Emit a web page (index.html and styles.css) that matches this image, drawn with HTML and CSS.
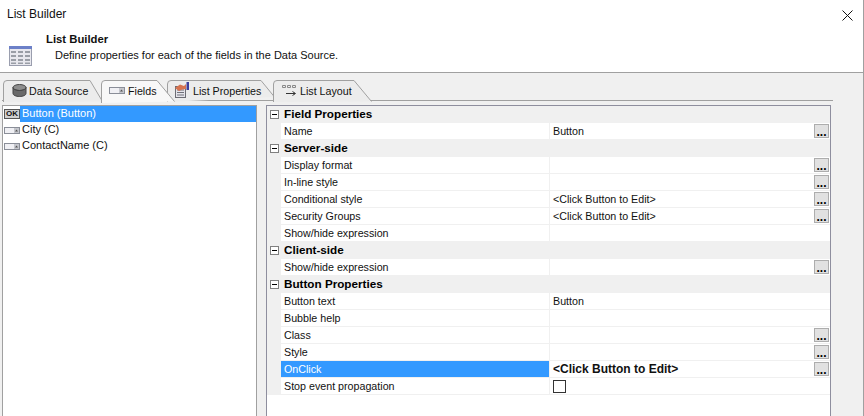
FILE: index.html
```html
<!DOCTYPE html>
<html lang="en">
<head>
<meta charset="utf-8">
<title>List Builder</title>
<link rel="stylesheet" href="styles.css">
</head>
<body>
<div class="window">
  <header class="head">
    <div class="titlebar">
      <span>List Builder</span>
      <svg class="close" width="11" height="11" viewBox="0 0 11 11"><path d="M0.5 0.5L10.5 10.5M10.5 0.5L0.5 10.5" stroke="#111" fill="none"/></svg>
    </div>
    <div class="banner">
      <svg class="banner-icon" width="23" height="20" viewBox="0 0 23 20">
        <rect x="0.5" y="0.5" width="22" height="19" fill="#e8e8ee" stroke="#9a9eae"/>
        <rect x="0" y="0" width="23" height="3" fill="#6c80c8"/>
        <path d="M2 5h5v2h-5zM9 5h5v2h-5zM16 5h5v2h-5zM2 9h5v2h-5zM9 9h5v2h-5zM16 9h5v2h-5zM2 13h5v2h-5zM9 13h5v2h-5zM16 13h5v2h-5zM2 16.500h5v1.500h-5zM9 16.500h5v1.500h-5zM16 16.500h5v1.500h-5z" fill="#9a9ea6"/>
      </svg>
      <div class="banner-text">
        <div class="banner-title">List Builder</div>
        <div class="banner-sub">Define properties for each of the fields in the Data Source.</div>
      </div>
    </div>
  </header>
  <main class="body">
    <nav class="tabs">
      <div class="tab tab-source">
        <svg class="tab-bg" width="100" height="22" viewBox="0 0 100 22"><path d="M0.500 22V4Q0.500 0.500 4 0.500H87L99.500 21.500" fill="#ececec" stroke="#a0a0a0"/></svg>
        <svg class="tab-icon" width="15" height="13" viewBox="0 0 15 13"><ellipse cx="7.500" cy="3.500" rx="6.500" ry="3" fill="#8e8e8e" stroke="#444"/><path d="M1 3.500V9.500C1 11.200 4 12.500 7.500 12.500S14 11.200 14 9.500V3.500C14 5.200 11 6.500 7.500 6.500S1 5.200 1 3.500Z" fill="#6a6a6a" stroke="#444"/></svg>
        <span>Data Source</span>
      </div>
      <div class="tab tab-fields">
        <svg class="tab-bg" width="74" height="23" viewBox="0 0 74 23"><path d="M0.500 23V4Q0.500 0.500 4 0.500H56L73.500 21.500" fill="#f8f8f8" stroke="#a0a0a0"/></svg>
        <svg class="tab-icon" width="16" height="7" viewBox="0 0 16 7"><rect x="0.500" y="0.500" width="15" height="6" fill="#f0f0f4" stroke="#8a8e98"/><rect x="10" y="1" width="5" height="5" fill="#c4c6cc"/><path d="M11 4.500h3l-1.500-2z" fill="#555"/></svg>
        <span>Fields</span>
      </div>
      <div class="tab tab-props">
        <svg class="tab-bg" width="108" height="22" viewBox="0 0 108 22"><path d="M0.500 22V4Q0.500 0.500 4 0.500H94L107.500 17" fill="#ececec" stroke="#a0a0a0"/></svg>
        <svg class="tab-icon" width="16" height="16" viewBox="0 0 16 16"><rect x="1.500" y="4.500" width="10" height="11" fill="#e4e4ea" stroke="#6c6c74"/><path d="M3 8h7M3 10.500h7M3 13h7" stroke="#70707a"/><path d="M1 6L6 2.500L10 4L12 2V7L8 7.500L5 9Z" fill="#d6734f"/><rect x="12.500" y="0" width="2.500" height="8" fill="#3c3f9c"/></svg>
        <span>List Properties</span>
      </div>
      <div class="tab tab-layout">
        <svg class="tab-bg" width="99" height="22" viewBox="0 0 99 22"><path d="M0.500 22V4Q0.500 0.500 4 0.500H81L98.500 21.500" fill="#ececec" stroke="#a0a0a0"/></svg>
        <svg class="tab-icon" width="15" height="13" viewBox="0 0 15 13"><path d="M0.500 1.500h3v2h-3zM5.500 1.500h3v2h-3zM10.500 1.500h3v2h-3z" fill="none" stroke="#888"/><path d="M4 9.500h9M10.500 7.500l3 2-3 2" stroke="#333" fill="none"/></svg>
        <span>List Layout</span>
      </div>
    </nav>
    <div class="panels">
      <ul class="tree">
        <li class="tree-row">
          <span class="ok-icon">OK</span>
          <span class="tree-label selected">Button (Button)</span>
        </li>
        <li class="tree-row">
          <svg class="field-icon" width="16" height="7" viewBox="0 0 16 7"><rect x="0.500" y="0.500" width="15" height="6" fill="#f0f0f4" stroke="#8a8e98"/><rect x="10" y="1" width="5" height="5" fill="#c4c6cc"/><path d="M11 4.500h3l-1.500-2z" fill="#555"/></svg>
          <span class="tree-label">City (C)</span>
        </li>
        <li class="tree-row">
          <svg class="field-icon" width="16" height="7" viewBox="0 0 16 7"><rect x="0.500" y="0.500" width="15" height="6" fill="#f0f0f4" stroke="#8a8e98"/><rect x="10" y="1" width="5" height="5" fill="#c4c6cc"/><path d="M11 4.500h3l-1.500-2z" fill="#555"/></svg>
          <span class="tree-label">ContactName (C)</span>
        </li>
      </ul>
      <div class="grid">
        <div class="group"><span class="toggle"></span><span>Field Properties</span></div>
        <div class="row"><div class="name">Name</div><div class="value">Button<button class="dots">...</button></div></div>
        <div class="group"><span class="toggle"></span><span>Server-side</span></div>
        <div class="row"><div class="name">Display format</div><div class="value"><button class="dots">...</button></div></div>
        <div class="row"><div class="name">In-line style</div><div class="value"><button class="dots">...</button></div></div>
        <div class="row"><div class="name">Conditional style</div><div class="value">&lt;Click Button to Edit&gt;<button class="dots">...</button></div></div>
        <div class="row"><div class="name">Security Groups</div><div class="value">&lt;Click Button to Edit&gt;<button class="dots">...</button></div></div>
        <div class="row"><div class="name">Show/hide expression</div><div class="value"></div></div>
        <div class="group"><span class="toggle"></span><span>Client-side</span></div>
        <div class="row"><div class="name">Show/hide expression</div><div class="value"><button class="dots">...</button></div></div>
        <div class="group"><span class="toggle"></span><span>Button Properties</span></div>
        <div class="row"><div class="name">Button text</div><div class="value">Button</div></div>
        <div class="row"><div class="name">Bubble help</div><div class="value"></div></div>
        <div class="row"><div class="name">Class</div><div class="value"><button class="dots">...</button></div></div>
        <div class="row"><div class="name">Style</div><div class="value"><button class="dots">...</button></div></div>
        <div class="row active"><div class="name">OnClick</div><div class="value">&lt;Click Button to Edit&gt;<button class="dots">...</button></div></div>
        <div class="row"><div class="name">Stop event propagation</div><div class="value"><span class="check"></span></div></div>
      </div>
    </div>
  </main>
</div>
</body>
</html>
```
FILE: styles.css
```css
* { box-sizing: border-box; }
html, body { margin: 0; height: 100%; overflow: hidden; }
body { font-family: "Liberation Sans", Arial, sans-serif; font-size: 11px; color: #111; background: #fff; }
.window { width: 864px; height: 416px; display: flex; flex-direction: column; border-right: 1px solid #a0a0a0; overflow: hidden; }
.head { height: 73px; background: #fff; border-bottom: 1px solid #a0a0a0; flex: none; padding: 7px 10px 0 7px; }
.titlebar { display: flex; justify-content: space-between; align-items: center; height: 14px; font-size: 12px; }
.close { margin-top: 2px; }
.banner { display: flex; padding: 10px 0 0 2px; }
.banner-icon { margin-top: 15px; flex: none; }
.banner-text { margin-left: 14px; }
.banner-title { font-weight: bold; font-size: 11.300px; height: 16px; line-height: 16px; }
.banner-sub { margin-left: 9px; height: 16px; line-height: 16px; }
.body { flex: 1; min-height: 0; background: #f0f0f0; padding: 7px 32px 0 2px; display: flex; flex-direction: column; }
.tabs { display: flex; height: 21px; flex: none; margin-right: -2px; border-bottom: 1px solid #a0a0a0; padding-left: 1px; font-size: 10.700px; }
.tab { position: relative; height: 21px; display: flex; align-items: center; flex: none; }
.tab-bg { position: absolute; left: 0; top: 0; }
.tab-icon, .tab span { position: relative; }
.tab-source { width: 98px; padding-left: 9px; }
.tab-source .tab-icon { margin-right: 2px; }
.tab-fields { width: 66px; padding-left: 8px; z-index: 3; }
.tab-fields .tab-icon { margin-right: 3px; }
.tab-props { width: 106px; padding-left: 7px; z-index: 1; }
.tab-props .tab-icon { margin-right: 3px; margin-top: -2px; }
.tab-layout { width: 99px; padding-left: 9px; z-index: 2; }
.tab-layout .tab-icon { margin-right: 3px; }
.panels { flex: 1; min-height: 0; display: flex; margin-top: 4px; gap: 9px; }
.tree { list-style: none; margin: 0; padding: 0; width: 255px; background: #fff; border: 1px solid #a0a0a0; border-bottom: 0; flex: none; }
.tree-row { height: 16px; display: flex; align-items: center; }
.ok-icon, .field-icon { width: 16px; margin-left: 1px; flex: none; }
.ok-icon { height: 10px; background: #d0d0d0; border: 1px solid #555; font: bold 8px/8px "Liberation Sans", sans-serif; text-align: center; overflow: hidden; }
.tree-label { padding-left: 2px; color: #111; height: 16px; line-height: 14px; }
.selected { flex: 1; background: #3399ff; color: #fff; }
.grid { flex: 1; background: #fff; border: 1px solid #8e8e9e; border-bottom: 0; }
.group { height: 17px; background: #f0f0f0; display: flex; align-items: center; font-weight: bold; color: #000; font-size: 11.700px; padding-bottom: 2px; }
.toggle { width: 9px; height: 9px; border: 1px solid #808080; background: #fff linear-gradient(#000, #000) center / 5px 1px no-repeat; margin: 2px 5px 0 3px; flex: none; }
.row { height: 17px; display: flex; background: #f0f0f0; padding-left: 14px; }
.name, .value { background: #fff; border-bottom: 1px solid #f0f0f0; height: 17px; line-height: 16px; font-size: 10.700px; }
.name { width: 269px; padding-left: 3px; border-right: 1px solid #f0f0f0; flex: none; }
.value { flex: 1; position: relative; padding-left: 3px; display: flex; justify-content: space-between; align-items: flex-start; }
.dots { position: absolute; right: 1px; top: 1px; width: 15px; height: 14px; padding: 0; background: #e1e1e1; border: 1px solid #adadad; font: bold 12px/14px "Liberation Sans", sans-serif; color: #000; }
.active .name { background: #3399ff; color: #fff; }
.active .value { font-weight: bold; font-size: 12px; }
.check { width: 13px; height: 13px; border: 1px solid #333; background: #fff; margin-top: 2px; }
```
